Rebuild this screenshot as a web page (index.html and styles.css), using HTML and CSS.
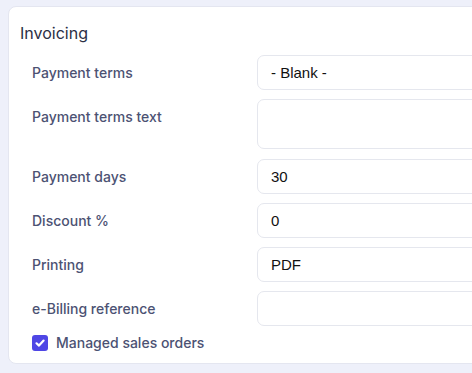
FILE: index.html
```html
<!DOCTYPE html>
<html lang="en">
<head>
  <meta charset="UTF-8" />
  <title>Invoicing</title>
  <link rel="stylesheet" href="styles.css">
</head>
<body>
  <div class="card">
    <div class="card-title">Invoicing</div>

    <div class="form">
      <div class="row">
        <label class="label">Payment terms</label>
        <div class="field">- Blank -</div>
      </div>
      <div class="row">
        <label class="label">Payment terms text</label>
        <div class="field field-text"></div>
      </div>
      <div class="row">
        <label class="label">Payment days</label>
        <div class="field">30</div>
      </div>
      <div class="row">
        <label class="label">Discount %</label>
        <div class="field">0</div>
      </div>
      <div class="row">
        <label class="label">Printing</label>
        <div class="field">PDF</div>
      </div>
      <div class="row">
        <label class="label">e-Billing reference</label>
        <div class="field"></div>
      </div>
    </div>

    <label class="check">
      <span class="box">
        <svg width="12" height="12" viewBox="0 0 12 12"><path d="M2.5 6.3 L5 8.6 L9.6 3.6" fill="none" stroke="#fff" stroke-width="2.2" stroke-linecap="round" stroke-linejoin="round"/></svg>
      </span>
      Managed sales orders
    </label>
  </div>
</body>
</html>
```

FILE: styles.css
```css
body {
  margin: 0;
  padding: 6px 0 0 8px;
  background: #eef0fa;
  font-family: Inter, "Noto Sans", sans-serif;
  overflow: hidden;
}

.card {
  width: 520px;
  background: #fff;
  border: 1px solid #e4e6f0;
  border-radius: 8px;
  padding: 14px 0 10px 11px;
}

.card-title {
  font-size: 16px;
  line-height: 24px;
  color: #2b2f45;
  margin-bottom: 10px;
}

.form {
  display: flex;
  flex-direction: column;
  gap: 9.3px;
  padding-left: 12px;
}

.row {
  display: flex;
  align-items: flex-start;
}

.label {
  width: 225px;
  flex-shrink: 0;
  font-size: 14px;
  font-weight: 500;
  line-height: 20px;
  padding-top: 8px;
  color: #4c5273;
}

.field {
  flex: 1;
  height: 35px;
  box-sizing: border-box;
  border: 1px solid #e5e7ee;
  border-radius: 7px;
  padding: 0 13px;
  font-family: "Liberation Sans", Arial, sans-serif;
  font-size: 15px;
  line-height: 33px;
  color: #111;
}

.field-text {
  height: 50px;
}

.check {
  display: flex;
  align-items: center;
  gap: 8px;
  margin: 7px 0 0 12px;
  font-size: 14px;
  font-weight: 500;
  line-height: 20px;
  color: #4c5273;
}

.box {
  width: 16px;
  height: 16px;
  border-radius: 3px;
  background: #4f46e5;
  display: flex;
  align-items: center;
  justify-content: center;
}
```
